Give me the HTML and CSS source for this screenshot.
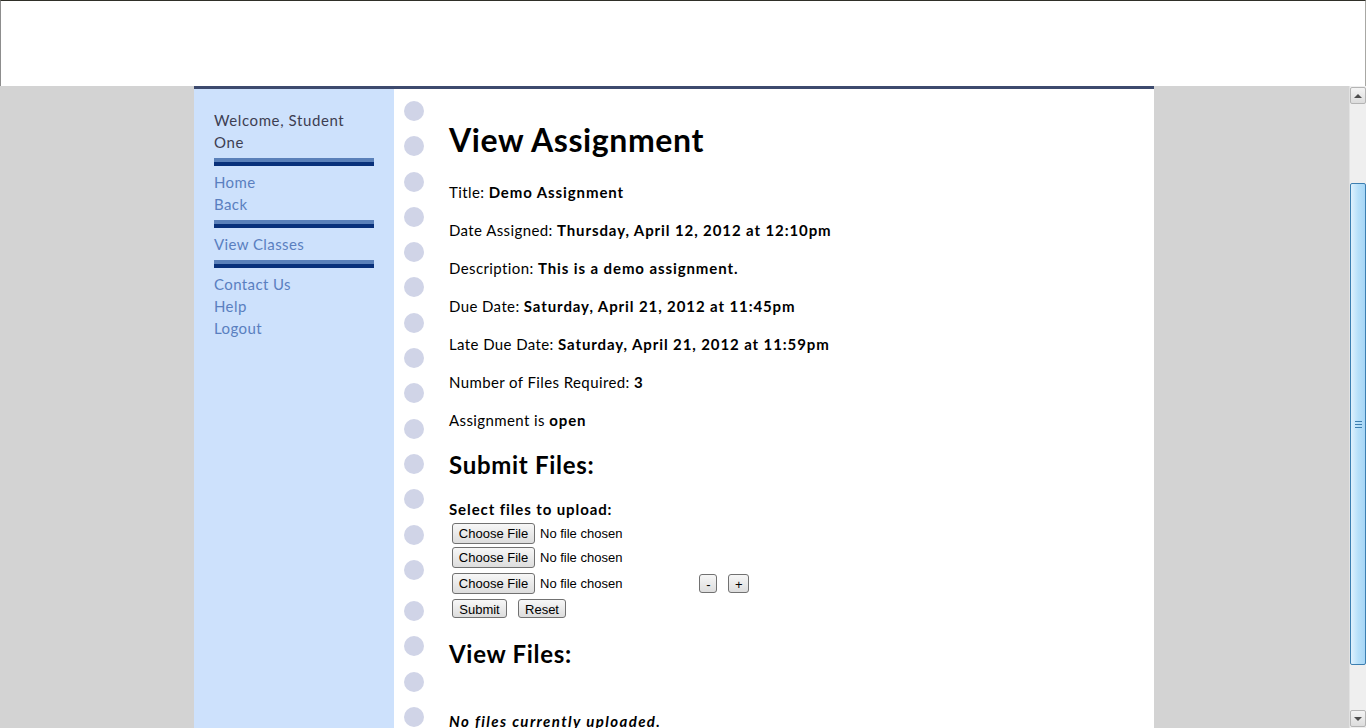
FILE: index.html
```html
<!DOCTYPE html>
<html>
<head>
<meta charset="utf-8">
<title>View Assignment</title>
<link rel="stylesheet" href="styles.css">
</head>
<body>
<div class="topband"></div>
<div class="viewport">
  <div class="stage">
    <div class="page">
      <nav class="sidebar">
        <div class="welcome">Welcome, Student One</div>
        <div class="sep"></div>
        <a class="nav-link" href="#">Home</a>
        <a class="nav-link" href="#">Back</a>
        <div class="sep"></div>
        <a class="nav-link" href="#">View Classes</a>
        <div class="sep"></div>
        <a class="nav-link" href="#">Contact Us</a>
        <a class="nav-link" href="#">Help</a>
        <a class="nav-link" href="#">Logout</a>
      </nav>
      <div class="holes">
        <span class="hole"></span><span class="hole"></span><span class="hole"></span>
        <span class="hole"></span><span class="hole"></span><span class="hole"></span>
        <span class="hole"></span><span class="hole"></span><span class="hole"></span>
        <span class="hole"></span><span class="hole"></span><span class="hole"></span>
        <span class="hole"></span><span class="hole"></span><span class="hole hole-shift"></span>
        <span class="hole"></span><span class="hole"></span><span class="hole"></span>
      </div>
      <main class="content">
        <h1 class="title">View Assignment</h1>
        <p class="field">Title: <b>Demo Assignment</b></p>
        <p class="field">Date Assigned: <b>Thursday, April 12, 2012 at 12:10pm</b></p>
        <p class="field">Description: <b>This is a demo assignment.</b></p>
        <p class="field">Due Date: <b>Saturday, April 21, 2012 at 11:45pm</b></p>
        <p class="field">Late Due Date: <b>Saturday, April 21, 2012 at 11:59pm</b></p>
        <p class="field">Number of Files Required: <b>3</b></p>
        <p class="field">Assignment is <b>open</b></p>
        <h2 class="section">Submit Files:</h2>
        <form class="upload">
          <div class="upload-label">Select files to upload:</div>
          <div class="file-row row1"><button type="button" class="btn btn-choose">Choose File</button><span class="nofile">No file chosen</span></div>
          <div class="file-row row2"><button type="button" class="btn btn-choose">Choose File</button><span class="nofile">No file chosen</span></div>
          <div class="file-row row3"><button type="button" class="btn btn-choose">Choose File</button><span class="nofile">No file chosen</span><button type="button" class="btn btn-minus">-</button><button type="button" class="btn btn-plus">+</button></div>
          <div class="file-row row4"><button type="button" class="btn btn-submit">Submit</button><button type="button" class="btn btn-reset">Reset</button></div>
        </form>
        <h2 class="section section-files">View Files:</h2>
        <p class="empty">No files currently uploaded.</p>
      </main>
    </div>
  </div>
  <div class="scrollbar">
    <div class="sb-btn"><span class="arrow-up"></span></div>
    <div class="sb-track">
      <div class="sb-thumb"><span class="grip"></span></div>
    </div>
    <div class="sb-btn"><span class="arrow-down"></span></div>
  </div>
</div>
</body>
</html>
```
FILE: styles.css
```css
html, body {
  margin: 0;
  padding: 0;
  height: 100%;
  overflow: hidden;
}
body {
  background: #d3d3d3;
  font-family: Lato, "DejaVu Sans", sans-serif;
  font-size: 15px;
  letter-spacing: 0.4px;
  color: #000;
}
.topband {
  height: 86px;
  box-sizing: border-box;
  background: #fff;
  border-top: 1px solid #2f2f28;
  border-left: 1px solid #8d8d8d;
  border-right: 1px solid #a8a8a4;
}
.viewport {
  display: flex;
  height: 642px;
}
.stage {
  flex: 1;
  overflow: hidden;
}
.page {
  width: 960px;
  margin-left: 194px;
  height: 100%;
  border-top: 3px solid #3d4a6e;
  display: flex;
  background: #fff;
}
.sidebar {
  width: 200px;
  box-sizing: border-box;
  background: #cde1fc;
  padding: 20px 20px 0 20px;
  display: flex;
  flex-direction: column;
}
.welcome {
  color: #3d3e52;
  line-height: 22px;
  width: 140px;
  letter-spacing: 0.6px;
}
.sep {
  height: 8px;
  width: 160px;
  margin: 5px 0;
  background: linear-gradient(#5a80b9 0, #5a80b9 4px, #08307a 4px, #08307a 8px);
}
.nav-link {
  color: #5a7fc0;
  text-decoration: none;
  line-height: 22px;
}
.holes {
  width: 40px;
  box-sizing: border-box;
  padding: 12px 0 0 10px;
  display: flex;
  flex-direction: column;
  gap: 15.3px;
}
.hole {
  display: block;
  width: 20px;
  height: 20px;
  border-radius: 50%;
  background: #d0d4e7;
  flex: none;
}
.hole-shift {
  margin-top: 6px;
}
.content {
  flex: 1;
  padding-left: 15px;
}
.title {
  font-size: 32px;
  font-weight: bold;
  line-height: 38px;
  letter-spacing: 0.6px;
  margin: 32px 0 24px 0;
}
.field {
  margin: 0 0 20px 0;
  line-height: 18px;
}
.field b, .upload-label {
  font-weight: bold;
  letter-spacing: 0.9px;
}
.section {
  font-size: 24px;
  line-height: 28px;
  margin: 22px 0 0 0;
  font-weight: bold;
  letter-spacing: 0.7px;
}
.upload {
  margin: 21px 0 0 0;
}
.upload-label {
  line-height: 18px;
}
.file-row {
  display: flex;
  align-items: center;
  font-family: "Liberation Sans", Arial, sans-serif;
  font-size: 13px;
  letter-spacing: 0;
  padding-left: 3px;
}
.row1 { margin-top: 5px; }
.row2 { margin-top: 3px; }
.row3 { margin-top: 5px; }
.row4 { margin-top: 5px; }
.btn {
  font-family: "Liberation Sans", Arial, sans-serif;
  font-size: 13px;
  letter-spacing: 0;
  color: #000;
  background: linear-gradient(#f7f7f7, #dddddd);
  border: 1px solid #717171;
  border-radius: 3px;
  padding: 0;
  box-sizing: border-box;
  height: 21px;
  line-height: 19px;
}
.btn-choose { width: 83px; }
.nofile { margin-left: 5px; line-height: 21px; }
.btn-minus { width: 18px; height: 19px; margin-left: 77px; }
.btn-plus { width: 21px; height: 19px; margin-left: 11px; }
.btn-submit { width: 55px; height: 19px; }
.btn-reset { width: 48px; height: 19px; margin-left: 11px; }
.section-files {
  margin-top: 22px;
}
.empty {
  margin: 44px 0 0 0;
  font-weight: bold;
  font-style: italic;
  letter-spacing: 1.4px;
  line-height: 18px;
}
.scrollbar {
  width: 17px;
  background: #efefef;
  border-left: 1px solid #e2e2e2;
  box-sizing: border-box;
  display: flex;
  flex-direction: column;
}
.sb-btn {
  height: 15px;
  margin: 1px 0;
  border: 1px solid #b4b4b4;
  border-radius: 2px;
  background: linear-gradient(#f4f4f4, #dcdcdc);
  display: flex;
  align-items: center;
  justify-content: center;
}
.arrow-up {
  width: 0; height: 0;
  border-left: 4px solid transparent;
  border-right: 4px solid transparent;
  border-bottom: 4px solid #4d4d4d;
}
.arrow-down {
  width: 0; height: 0;
  border-left: 4px solid transparent;
  border-right: 4px solid transparent;
  border-top: 4px solid #4d4d4d;
}
.sb-track {
  flex: 1;
  padding: 78px 0 44px 0;
  display: flex;
}
.sb-thumb {
  flex: 1;
  border: 1px solid #3c7fb1;
  border-radius: 2px;
  background: linear-gradient(to right, #dff1fd, #b8e0f9 50%, #a6d6f6);
  display: flex;
  align-items: center;
  justify-content: center;
}
.grip {
  width: 7px;
  height: 7px;
  background: linear-gradient(#3e7fb0 0, #3e7fb0 1px, transparent 1px, transparent 3px, #3e7fb0 3px, #3e7fb0 4px, transparent 4px, transparent 6px, #3e7fb0 6px, #3e7fb0 7px);
}
```
